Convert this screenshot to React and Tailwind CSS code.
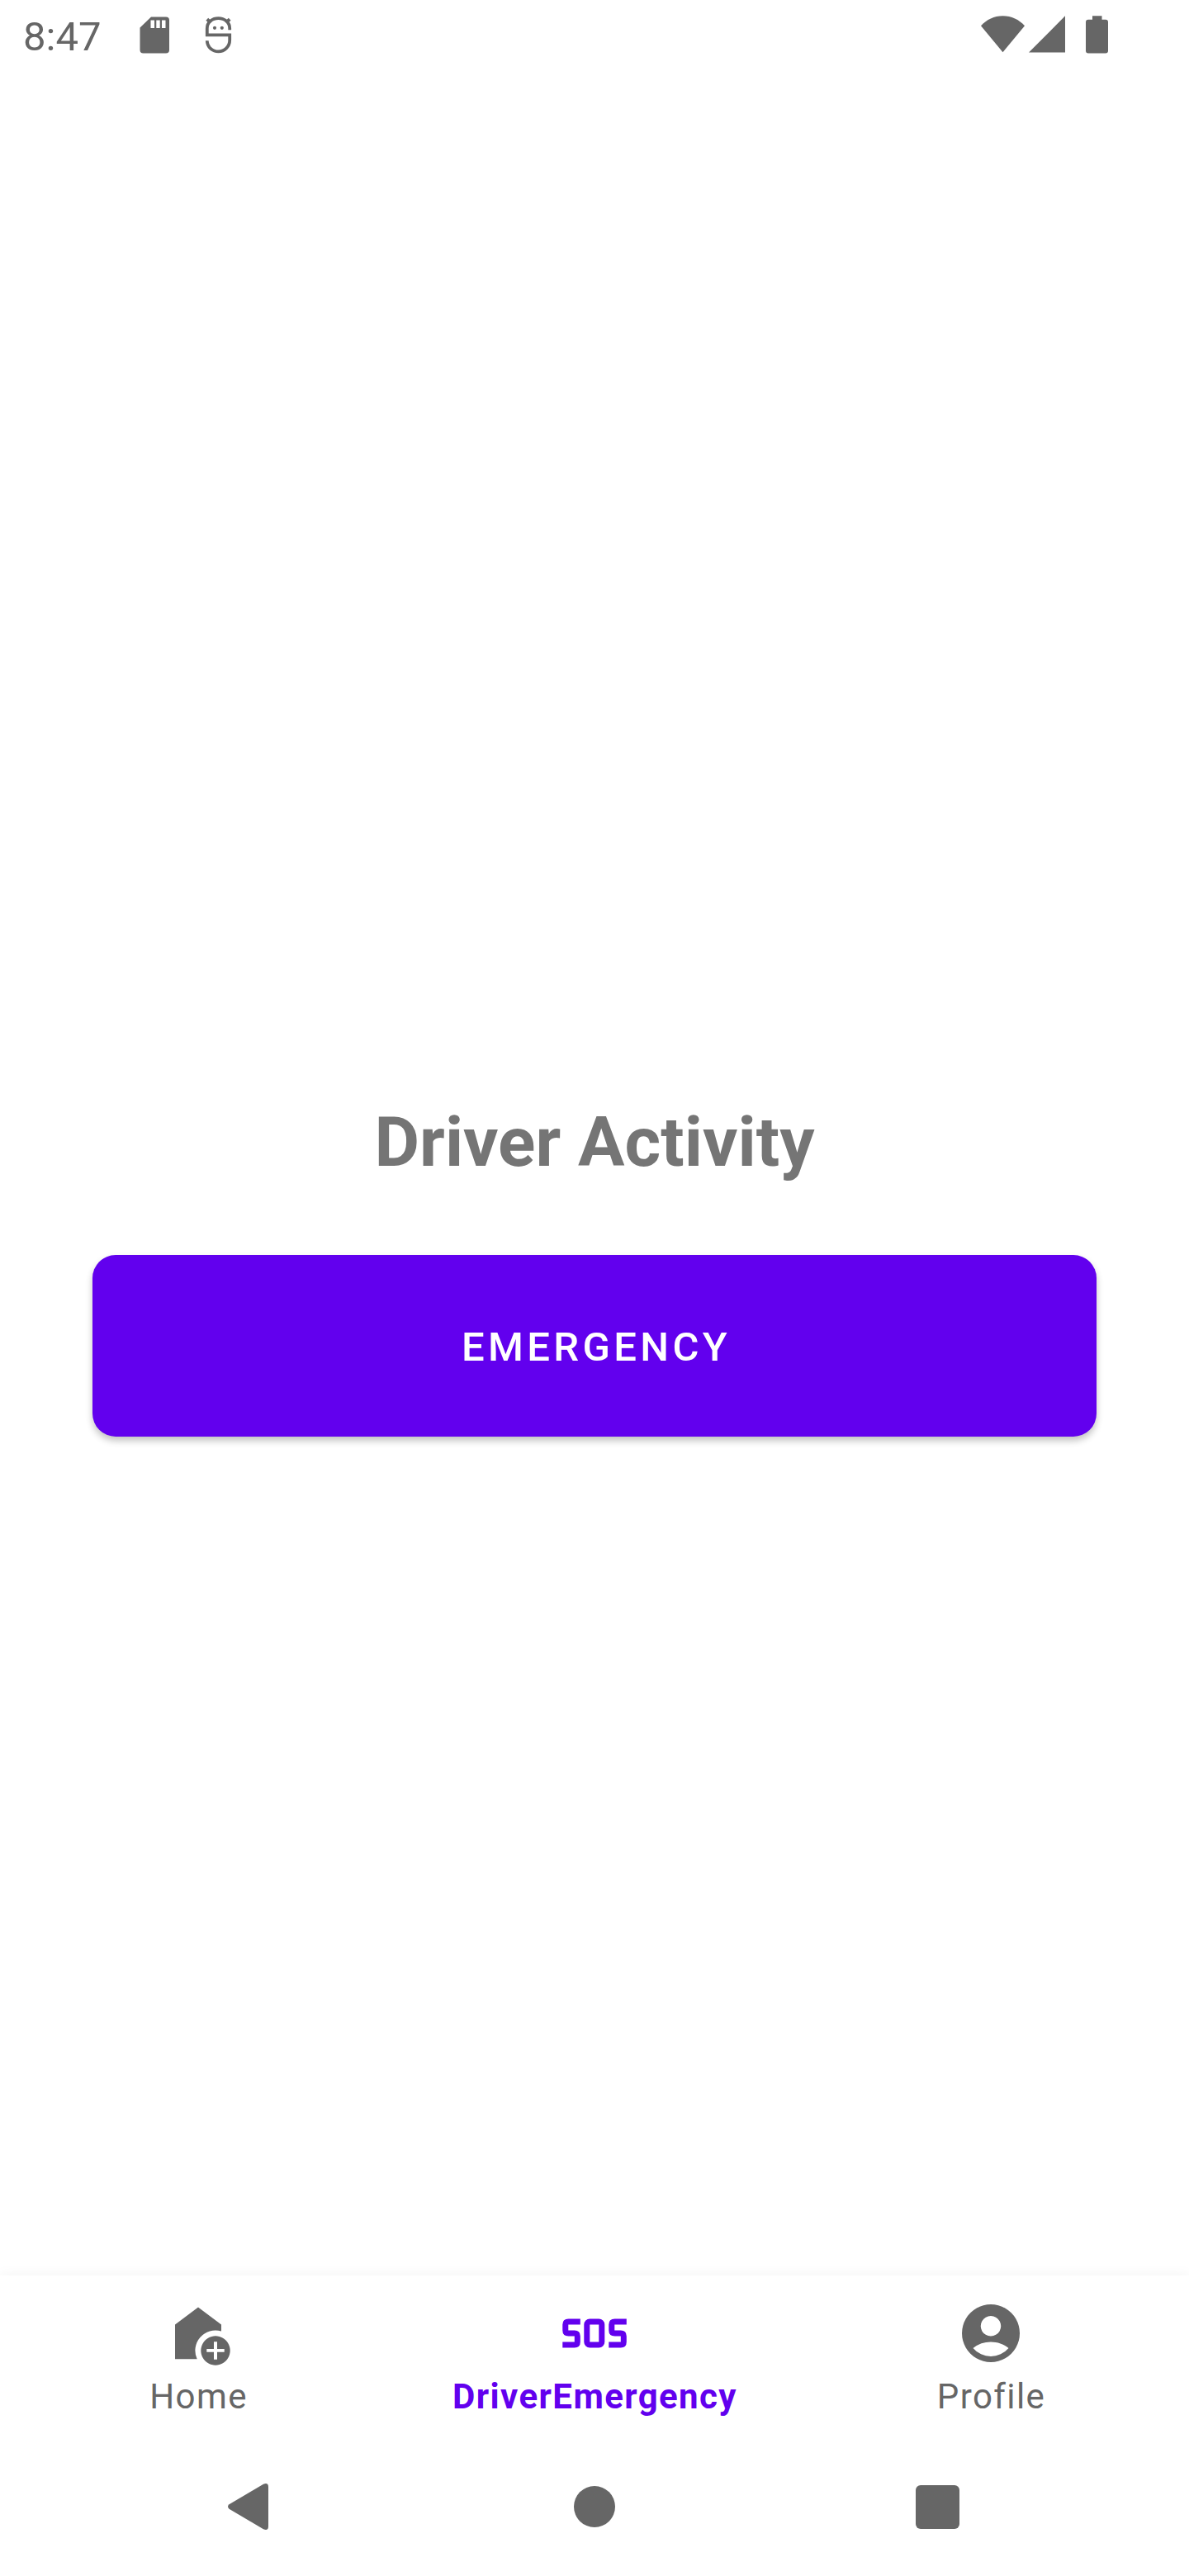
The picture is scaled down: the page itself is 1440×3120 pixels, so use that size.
function StatusBar() {
  return (
    <header className="flex h-[84px] shrink-0 items-center justify-between pl-[28px] pr-[98px] text-[#666666]">
      <div className="flex items-center">
        <span className="mt-[4px] w-[96px] text-[49px] leading-[57px]">8:47</span>
        <svg className="ml-[45px] h-[45px] w-[36px]" viewBox="0 0 36 45" fill="currentColor">
          <path fillRule="evenodd" d="M14 0.5H32Q36 .5 36 4.5V40.5Q36 44.5 32 44.5H4.5Q.5 44.5 .5 40.5V13.5ZM13.5 4.5V14H18V4.5ZM20.3 4.5V14H24.7V4.5ZM27 4.5V14H31.5V4.5Z" />
        </svg>
        <svg className="ml-[43px] h-[45px] w-[33px]" viewBox="0 0 33 45" fill="none" stroke="currentColor" strokeWidth="3.8">
          <path d="M30.2 16.2V14.5C30.2 7 24 2.2 16.5 2.2S2.8 7 2.8 14.5V22.4H30.2V28.5C30.2 36.5 24 42.4 16.5 42.4S2.8 36.5 2.8 29.2" />
          <path d="M2.8 3.2L6.5 6.8M30.2 3.2L26.5 6.8" strokeWidth="4" />
          <circle cx="12" cy="13.8" r="2.1" fill="currentColor" stroke="none" />
          <circle cx="20.8" cy="13.8" r="2.1" fill="currentColor" stroke="none" />
        </svg>
      </div>
      <div className="flex items-center">
        <svg className="h-[46px] w-[53px]" viewBox="0 0 53 46" fill="currentColor">
          <path d="M0 12.3C7 4.5 16 .2 26.500 .2S46 4.500 53 12.300L26.500 44.300Z" />
        </svg>
        <svg className="ml-[5px] h-[46px] w-[44px]" viewBox="0 0 44 46" fill="currentColor">
          <path d="M44 .3V44.500H0Z" />
        </svg>
        <svg className="ml-[25px] h-[46px] w-[27px]" viewBox="0 0 27 46" fill="currentColor">
          <path d="M8 .2H19.500V4.800H24Q27 4.800 27 7.800V42.600Q27 45.600 24 45.600H3Q0 45.600 0 42.600V7.800Q0 4.800 3 4.800H8Z" />
        </svg>
      </div>
    </header>
  );
}

function HomeIcon() {
  return (
    <svg className="h-[84px] w-[84px]" viewBox="0 0 84 84" fill="currentColor">
      <path d="M14 31.500L42 10.500L70 31.500V39.500A24.500 24.500 0 0 0 40.700 73.300H14Z" />
      <path fillRule="evenodd" d="M63 45.300a17.700 17.700 0 1 0 .01 0ZM61 52.300H65V61H73.700V64.800H65V73.700H61V64.800H52.300V61H61Z" />
    </svg>
  );
}

function SosIcon() {
  return (
    <svg className="h-[84px] w-[84px]" viewBox="0 0 84 84" fill="none" stroke="currentColor" strokeWidth="7">
      <path d="M24.800 28H10.500Q6.800 28 6.800 31.500V38.500Q6.800 42 10.500 42H17.800Q21.300 42 21.300 45.500V52.500Q21.300 56 17.800 56H3.300" />
      <rect x="32.800" y="28" width="18" height="28" rx="3.500" />
      <path d="M80.800 28H66.500Q62.800 28 62.800 31.500V38.500Q62.800 42 66.500 42H73.800Q77.300 42 77.300 45.500V52.500Q77.300 56 73.800 56H59.300" />
    </svg>
  );
}

function ProfileIcon() {
  return (
    <svg className="h-[84px] w-[84px]" viewBox="0 0 24 24" fill="currentColor">
      <path fillRule="evenodd" d="M12 2a10 10 0 1 0 .01 0ZM12 6a3.500 3.500 0 1 1-.01 0ZM5.860 17.120A9.950 9.950 0 0 1 12 15C14.320 15 16.450 15.790 18.140 17.120A8 8 0 0 1 5.860 17.120Z" />
    </svg>
  );
}

const tabs = [
  { label: "Home", Icon: HomeIcon, active: false },
  { label: "DriverEmergency", Icon: SosIcon, active: true },
  { label: "Profile", Icon: ProfileIcon, active: false },
];

export default function App() {
  return (
    <div className="flex h-[3120px] w-[1440px] flex-col overflow-hidden bg-white font-['Roboto',sans-serif]">
      <StatusBar />
      <main className="flex flex-1 flex-col px-[112px] pt-[1251px]">
        <h1 className="text-center text-[84px] leading-[98px] font-bold text-[#757575]">Driver Activity</h1>
        <button className="mt-[87px] h-[220px] w-full rounded-[28px] bg-[#6200ee] pt-[4px] pl-[4px] text-[49px] font-medium tracking-[4.375px] text-white shadow-[0_5px_9px_rgba(0,0,0,0.24)]">
          EMERGENCY
        </button>
      </main>
      <nav className="grid h-[196px] shrink-0 grid-cols-3 bg-white shadow-[0_-2px_14px_rgba(0,0,0,0.045)]">
        {tabs.map(({ label, Icon, active }) => (
          <div key={label} className={active ? "flex flex-col items-center pt-[28px] font-bold text-[#6200ee]" : "flex flex-col items-center pt-[28px] text-[#666666]"}>
            <Icon />
            <span className="mt-[10px] pl-px text-[42px] leading-[49px] tracking-[1.4px]">{label}</span>
          </div>
        ))}
      </nav>
      <footer className="flex h-[168px] shrink-0 items-center bg-white pl-[275px] text-[#666666]">
        <svg className="h-[58px] w-[51px]" viewBox="0 0 51 58" fill="currentColor">
          <path d="M2.500 26.300L44 1.700Q50 -.5 50 5V53Q50 58.500 44 56.300L2.500 31.700Q-.5 29 2.500 26.300Z" />
        </svg>
        <div className="ml-[369px] size-[50px] rounded-full bg-[#666666]" />
        <div className="ml-[364px] size-[53px] rounded-[6px] bg-[#666666]" />
      </footer>
    </div>
  );
}
